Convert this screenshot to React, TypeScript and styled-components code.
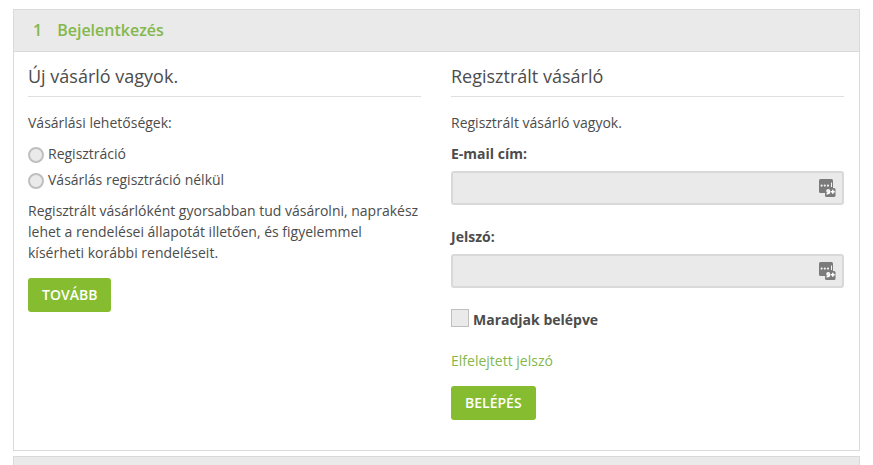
import React from "react";
import styled, { createGlobalStyle } from "styled-components";

const GlobalStyle = createGlobalStyle`
  *, *::before, *::after { box-sizing: border-box; }
  body {
    margin: 0;
    background: #fff;
    color: #4c4c4c;
    font-family: "Open Sans", "Noto Sans", sans-serif;
    font-size: 14px;
    line-height: 21px;
  }
`;

const Page = styled.main`
  display: flex;
  flex-direction: column;
  gap: 5px;
  min-height: 100vh;
  padding: 9px 13px 0;
`;

const Step = styled.section`
  border: 1px solid #dadada;
`;

const NextStep = styled.div`
  flex: 1;
  border: 1px solid #dadada;
  border-bottom: 0;
  background: #eaeaea;
`;

const StepTitle = styled.h1`
  display: flex;
  gap: 15px;
  margin: 0;
  padding: 10px 19px;
  border-bottom: 1px solid #dadada;
  background: #eaeaea;
  color: #84b84c;
  font-size: 16px;
  line-height: 21px;
  font-weight: 600;
`;

const Columns = styled.div`
  display: grid;
  grid-template-columns: 1fr 1fr;
  gap: 30px;
  padding: 10px 15px 30px 14px;
`;

const Column = styled.form`
  display: flex;
  flex-direction: column;
  align-items: flex-start;
  min-width: 0;
`;

const Heading = styled.h2`
  align-self: stretch;
  margin: 0 0 15px;
  padding: 4px 0 9px;
  border-bottom: 1px solid #dfdfdf;
  font-size: 18px;
  line-height: 21px;
  font-weight: 400;
`;

const Text = styled.p`
  margin: 0 0 10px;
`;

const Options = styled.div`
  display: flex;
  flex-direction: column;
  gap: 5px;
  margin-bottom: 10px;
`;

const Option = styled.label`
  display: flex;
  align-items: center;
  gap: 4px;
`;

const Radio = styled.input`
  appearance: none;
  width: 16px;
  height: 16px;
  margin: 2px 0 0;
  border: 2px solid #bfbfbf;
  border-radius: 50%;
  background: #eaeaea;
  &:checked { box-shadow: inset 0 0 0 3px #eaeaea; background: #86bc2f; }
`;

const Button = styled.button`
  height: 34px;
  margin-top: 5px;
  padding: 0 14px 2px;
  border: 0;
  border-radius: 3px;
  background: #86bc2f;
  color: #fff;
  font: 600 14px/21px "Open Sans", "Noto Sans", sans-serif;
  text-transform: uppercase;
  cursor: pointer;
`;

const Label = styled.label`
  margin-bottom: 7px;
  font-weight: 700;
`;

const InputWrap = styled.div`
  position: relative;
  align-self: stretch;
  margin-bottom: 21px;
`;

const Input = styled.input`
  display: block;
  width: 100%;
  height: 34px;
  padding: 0 34px 0 10px;
  border: 2px solid #d9d9d9;
  border-radius: 3px;
  background: #eaeaea;
  color: inherit;
  font: inherit;
`;

const Badge = styled.svg`
  position: absolute;
  top: 8px;
  right: 8px;
  width: 17px;
  height: 18px;
`;

const Remember = styled.label`
  display: flex;
  gap: 4px;
  margin-bottom: 20px;
  font-weight: 700;
`;

const Checkbox = styled.input`
  appearance: none;
  width: 18px;
  height: 18px;
  margin: 0;
  border: 1px solid #bfbfbf;
  background: #eaeaea;
  &:checked { box-shadow: inset 0 0 0 3px #eaeaea; background: #86bc2f; }
`;

const Link = styled.a`
  margin-bottom: 10px;
  color: #84b84c;
  text-decoration: none;
`;

function PasswordManagerIcon() {
  return (
    <Badge viewBox="0 0 17 18" aria-hidden="true">
      <rect x="0" y="0" width="14" height="14" rx="1.5" fill="#7b7b7b" />
      <g fill="#f4f4f4">
        <circle cx="2.6" cy="6.6" r="1.1" />
        <circle cx="5.8" cy="6.6" r="1.1" />
        <circle cx="9" cy="6.6" r="1.1" />
        <rect x="12" y="3.5" width="1" height="4.5" />
      </g>
      <rect x="6" y="9" width="10.5" height="9" rx="1.5" fill="#7b7b7b" />
      <g fill="none" stroke="#fff" strokeWidth="1.5">
        <circle cx="9.2" cy="12" r="1.2" />
        <path d="M10.5 11.8v1.2q0 2-3 1.7M11.8 12.8h4M13.8 10.8v4" />
      </g>
    </Badge>
  );
}

type FieldProps = { id: string; label: string; type: string };

function Field({ id, label, type }: FieldProps) {
  return (
    <>
      <Label htmlFor={id}>{label}</Label>
      <InputWrap>
        <Input id={id} name={id} type={type} />
        <PasswordManagerIcon />
      </InputWrap>
    </>
  );
}

export default function App() {
  return (
    <>
      <GlobalStyle />
      <Page>
        <Step>
          <StepTitle>
            <span>1</span>
            <span>Bejelentkezés</span>
          </StepTitle>
          <Columns>
            <Column onSubmit={(e) => e.preventDefault()}>
              <Heading>Új vásárló vagyok.</Heading>
              <Text>Vásárlási lehetőségek:</Text>
              <Options>
                <Option>
                  <Radio type="radio" name="mode" value="register" />
                  Regisztráció
                </Option>
                <Option>
                  <Radio type="radio" name="mode" value="guest" />
                  Vásárlás regisztráció nélkül
                </Option>
              </Options>
              <Text>
                Regisztrált vásárlóként gyorsabban tud vásárolni, naprakész lehet a
                rendelései állapotát illetően, és figyelemmel kísérheti korábbi
                rendeléseit.
              </Text>
              <Button type="submit">Tovább</Button>
            </Column>
            <Column onSubmit={(e) => e.preventDefault()}>
              <Heading>Regisztrált vásárló</Heading>
              <Text>Regisztrált vásárló vagyok.</Text>
              <Field id="email" label="E-mail cím:" type="email" />
              <Field id="password" label="Jelszó:" type="password" />
              <Remember>
                <Checkbox type="checkbox" name="remember" />
                Maradjak belépve
              </Remember>
              <Link href="#">Elfelejtett jelszó</Link>
              <Button type="submit">Belépés</Button>
            </Column>
          </Columns>
        </Step>
        <NextStep />
      </Page>
    </>
  );
}
